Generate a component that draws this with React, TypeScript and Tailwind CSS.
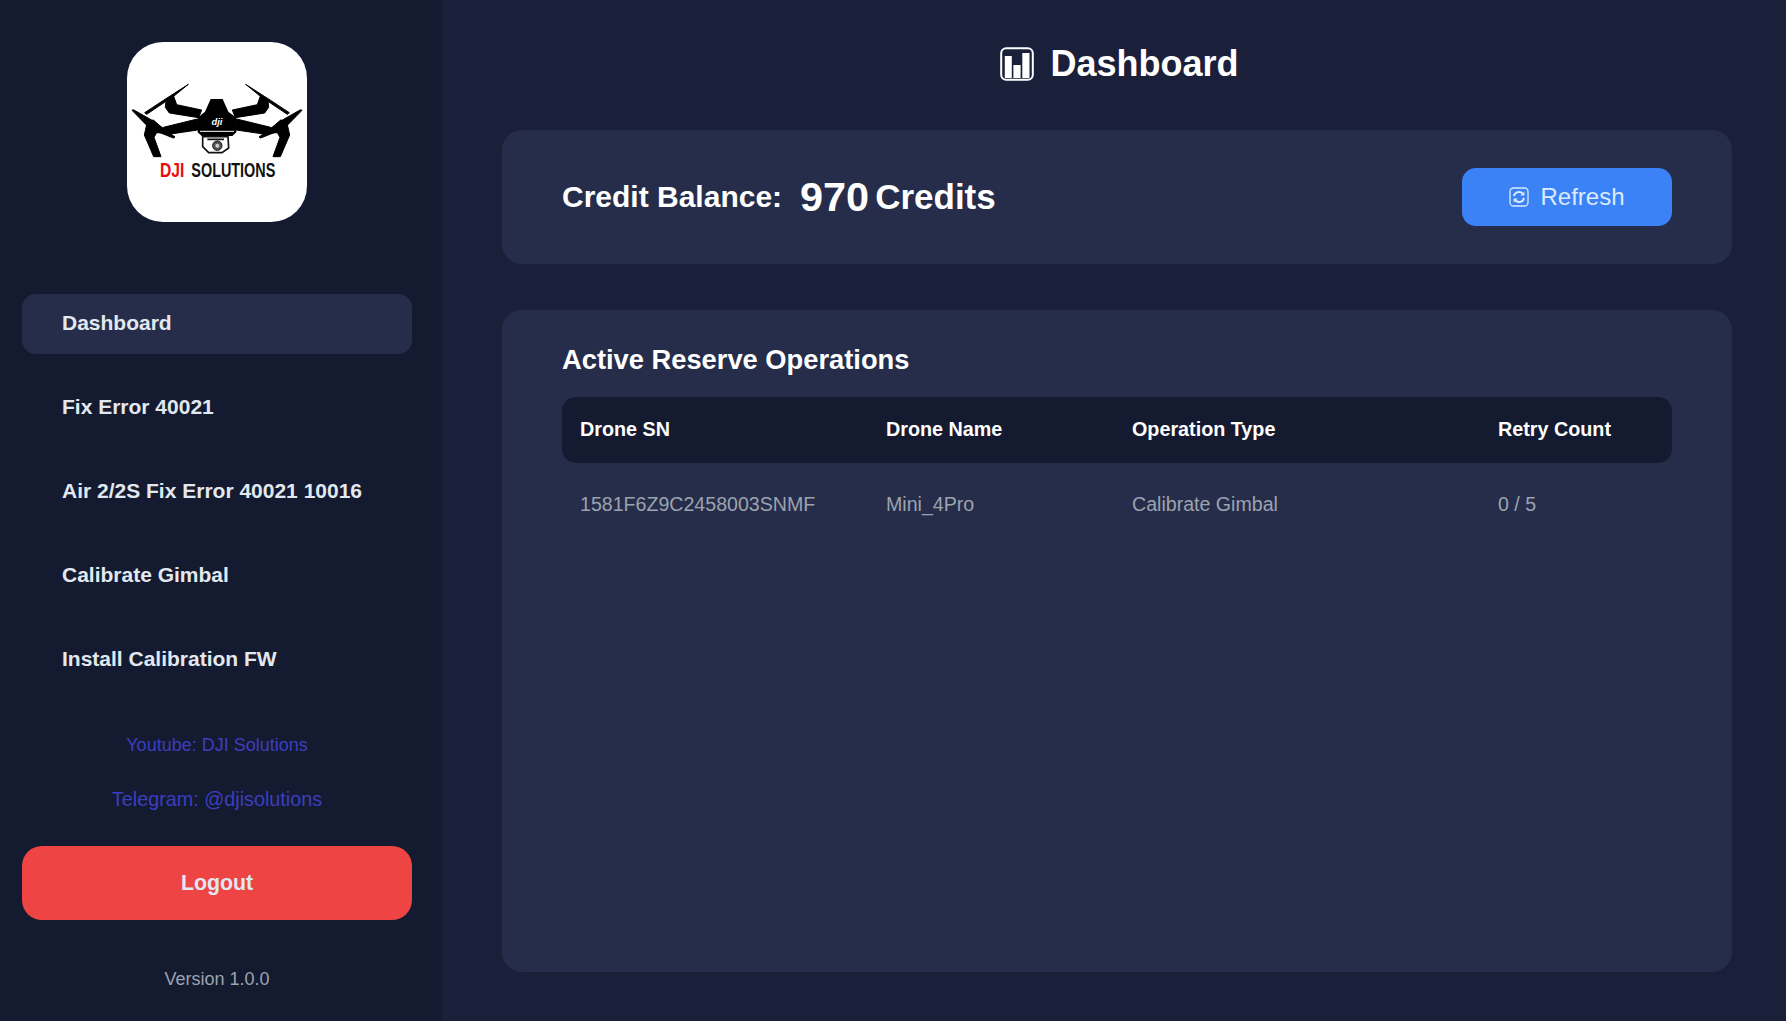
const navItems = ['Dashboard', 'Fix Error 40021', 'Air 2/2S Fix Error 40021 10016', 'Calibrate Gimbal', 'Install Calibration FW']

const columns = ['Drone SN', 'Drone Name', 'Operation Type', 'Retry Count']
const rowValues = ['1581F6Z9C2458003SNMF', 'Mini_4Pro', 'Calibrate Gimbal', '0 / 5']

// left half of the drone, the right half is the same shape mirrored
function DroneHalf() {
  return (
    <g fill="#000" stroke="#000" strokeWidth="3" strokeLinejoin="round">
      {/* top propeller */}
      <path d="M265 193 L222 228 L140 283 L134 278 L195 238 Z" />
      {/* upper arm */}
      <path d="M198 240 L220 226 L230 254 L305 270 L296 293 L208 279 L196 262 Z" />
      {/* lower arm */}
      <path d="M190 322 L292 297 L293 330 L198 344 Z" />
      {/* lower propeller */}
      <path d="M96 271 L100 269 L160 303 L225 351 L220 354 L150 326 Z" />
      {/* motor and leg */}
      <path d="M142 305 L160 300 L205 340 L170 338 L162 352 L183 410 L161 410 L133 345 Z" />
    </g>
  )
}

function Logo() {
  return (
    <div className="w-[180px] h-[180px] bg-white rounded-[36px] overflow-hidden">
      <svg viewBox="81 66 540 540" className="w-full h-full">
        <DroneHalf />
        <g transform="matrix(-1 0 0 1 702 0)">
          <DroneHalf />
        </g>
        {/* body */}
        <path d="M332 237 L368 237 L385 275 L409 293 L409 337 L397 348 L305 348 L293 337 L293 293 L315 275 Z" fill="#000" />
        <path d="M300 334 L402 334" stroke="#fff" strokeWidth="3" fill="none" />
        <text x="351" y="314" textAnchor="middle" fill="#fff" fontSize="28" fontWeight="700" fontStyle="italic" className="font-['Liberation_Sans',sans-serif]">dji</text>
        {/* camera */}
        <path d="M308 350 L384 350 L386 384 L366 398 L326 398 L308 380 Z" fill="#fff" stroke="#111" strokeWidth="5" />
        <path d="M322 358 L372 358" stroke="#111" strokeWidth="5" />
        <circle cx="352" cy="377" r="14" fill="#555" stroke="#111" strokeWidth="3" />
        <circle cx="352" cy="377" r="6" fill="#ccc" />
        <text x="180" y="471" fill="#ee0a0a" fontSize="58" fontWeight="700" textLength="73" lengthAdjust="spacingAndGlyphs" className="font-['Liberation_Sans',sans-serif]">DJI</text>
        <text x="274" y="471" fill="#111" fontSize="58" fontWeight="700" textLength="252" lengthAdjust="spacingAndGlyphs" className="font-['Liberation_Sans',sans-serif]">SOLUTIONS</text>
      </svg>
    </div>
  )
}

function ChartEmoji() {
  return (
    <svg viewBox="0 0 34 34" className="w-[34px] h-[34px]">
      <rect x="1.2" y="1.2" width="31.6" height="31.6" rx="5" fill="#1a2039" stroke="#fff" strokeWidth="2" />
      <rect x="4.8" y="9" width="7" height="22" fill="#fff" />
      <rect x="13.4" y="18" width="7.2" height="13" fill="#fff" />
      <rect x="22.3" y="6" width="7.2" height="25" fill="#fff" />
    </svg>
  )
}

function RefreshEmoji() {
  return (
    <svg viewBox="0 0 20 20" className="w-5 h-5" fill="none" stroke="#dbeafe">
      <rect x="1" y="1" width="18" height="18" rx="3.5" strokeWidth="1.3" />
      <path d="M5 9.2 A5 5 0 0 1 13.8 6.8" strokeWidth="2" />
      <path d="M15 10.8 A5 5 0 0 1 6.2 13.2" strokeWidth="2" />
      <path d="M11.4 8.6 L15.4 8.6 L15.4 4.6 Z M8.6 11.4 L4.6 11.4 L4.6 15.4 Z" fill="#dbeafe" stroke="none" />
    </svg>
  )
}

export default function App() {
  return (
    <div className="flex h-screen bg-[#1a2039] font-['Liberation_Sans',Arial,sans-serif] overflow-hidden">
      {/* Sidebar */}
      <aside className="w-[442px] shrink-0 bg-[#141a2f] flex flex-col pl-[22px] pr-[30px]">
        <div className="flex justify-center pt-[42px]">
          <Logo />
        </div>

        <nav className="mt-[72px] flex flex-col gap-6">
          {navItems.map((item, i) => (
            <div
              key={item}
              className={
                i === 0
                  ? 'h-[60px] flex items-center px-10 pb-[3px] rounded-[14px] bg-[#262d4a] text-[#e2e8f0] text-[21px] font-bold'
                  : 'h-[60px] flex items-center px-10 pb-[3px] rounded-[14px] text-[#e2e8f0] text-[21px] font-bold'
              }
            >
              {item}
            </div>
          ))}
        </nav>

        <div className="mt-[45px] flex flex-col items-center text-[#3b3fc0]">
          <div className="h-5 flex items-center text-lg">Youtube: DJI Solutions</div>
          <div className="h-5 mt-[35px] flex items-center text-[19.8px]">Telegram: @djisolutions</div>
        </div>

        <button className="mt-[36px] h-[74px] w-full pt-[2px] rounded-[20px] bg-[#ef4444] text-[#e2e8f0] text-[21.3px] font-bold">
          Logout
        </button>

        <div className="mt-[49px] text-center text-lg leading-5 text-[#9ca3af]">Version 1.0.0</div>
      </aside>

      {/* Main */}
      <main className="flex-1 min-w-0 flex flex-col pl-[60px] pr-[54px] pt-[46px]">
        <div className="flex items-center justify-center gap-4 h-[36px] pl-[5px]">
          <ChartEmoji />
          <h1 className="text-4xl leading-none font-bold text-white">Dashboard</h1>
        </div>

        <section className="mt-[48px] h-[134px] rounded-[20px] bg-[#262d4a] flex items-center justify-between px-[60px]">
          <div className="flex items-center">
            <span className="text-[30px] font-bold text-white">Credit Balance:</span>
            <span className="ml-[18px] text-[41.4px] font-bold text-white">970</span>
            <span className="ml-[6px] text-[35px] font-bold text-white">Credits</span>
          </div>
          <button className="w-[210px] h-[58px] rounded-[14px] bg-[#3b82f6] text-[#dbeafe] text-2xl flex items-center justify-center gap-[11px]">
            <RefreshEmoji />
            Refresh
          </button>
        </section>

        <section className="mt-[46px] h-[662px] rounded-[20px] bg-[#262d4a] px-[60px] pt-[30px]">
          <h2 className="text-[27.3px] leading-[40px] font-bold text-white">Active Reserve Operations</h2>
          <div className="mt-[17px] h-[66px] rounded-[14px] bg-[#141a2f] grid grid-cols-[306px_246px_366px_156px] items-center px-[18px] text-white text-[19.75px] font-bold">
            {columns.map(col => (
              <div key={col}>{col}</div>
            ))}
          </div>
          <div className="h-[84px] grid grid-cols-[306px_246px_366px_156px] items-center px-[18px] text-[#9ca3af] text-[19.6px]">
            {rowValues.map(val => (
              <div key={val}>{val}</div>
            ))}
          </div>
        </section>
      </main>
    </div>
  )
}
